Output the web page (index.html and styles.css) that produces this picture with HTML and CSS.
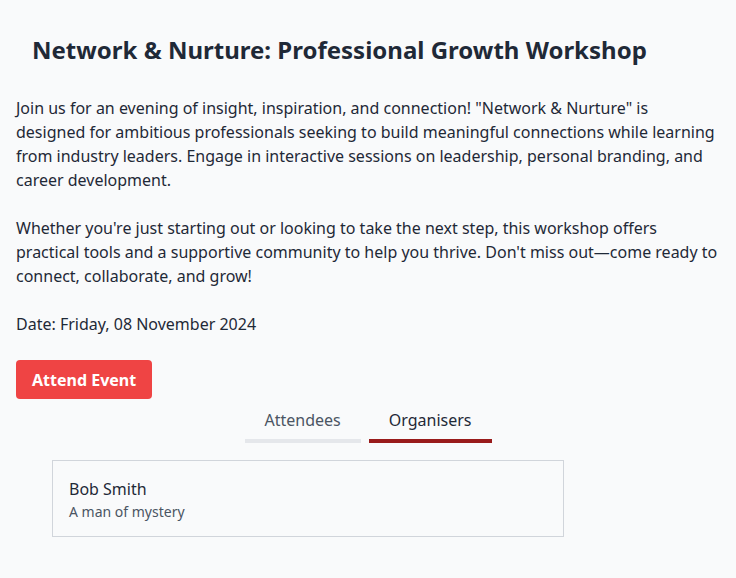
FILE: index.html
```html
<!DOCTYPE html>
<html>
<head>
<meta charset="utf-8">
<link rel="stylesheet" href="styles.css">
</head>
<body>
<div class="page">
  <h1 class="title">Network &amp; Nurture: Professional Growth Workshop</h1>
  <p class="desc first">Join us for an evening of insight, inspiration, and connection! "Network &amp; Nurture" is designed for ambitious professionals seeking to build meaningful connections while learning from industry leaders. Engage in interactive sessions on leadership, personal branding, and career development.</p>
  <p class="desc">Whether you're just starting out or looking to take the next step, this workshop offers practical tools and a supportive community to help you thrive. Don't miss out—come ready to connect, collaborate, and grow!</p>
  <p class="desc">Date: Friday, 08 November 2024</p>
  <button class="attend">Attend Event</button>
  <div class="tabs">
    <div class="tab">Attendees</div>
    <div class="tab active">Organisers</div>
  </div>
  <div class="list">
    <div class="card">
      <div class="name">Bob Smith</div>
      <div class="bio">A man of mystery</div>
    </div>
  </div>
</div>
</body>
</html>
```
FILE: styles.css
```css
html, body {
  margin: 0;
  background: #f9fafb;
}
body {
  font-family: "Noto Sans", "Open Sans", sans-serif;
  color: #1f2937;
}
.page {
  padding: 16px;
}
.title {
  margin: 18px 0 0 16px;
  font-size: 24px;
  line-height: 32px;
  font-weight: 700;
  color: #1f2937;
}
.desc {
  margin: 24px 0 0 0;
  font-size: 16px;
  line-height: 24px;
}
.desc.first {
  margin-top: 30px;
}
.attend {
  margin-top: 24px;
  background: #ef4444;
  color: #fff;
  border: none;
  border-radius: 4px;
  font-family: inherit;
  font-size: 16px;
  font-weight: 700;
  height: 39px;
  padding: 0 16px;
}
.tabs {
  display: flex;
  justify-content: center;
  gap: 8px;
}
.tab {
  font-size: 16px;
  line-height: 34px;
  padding: 4px 20px 2px;
  border-bottom: 4px solid #e5e7eb;
  color: #4b5563;
}
.tab.active {
  border-bottom-color: #991b1b;
  color: #1f2937;
}
.list {
  margin-top: 17px;
  padding-left: 36px;
}
.card {
  box-sizing: border-box;
  width: 512px;
  border: 1px solid #d1d5db;
  padding: 18px 16px 14px;
}
.name {
  font-size: 16px;
  line-height: 20px;
}
.bio {
  margin-top: 3px;
  font-size: 14px;
  line-height: 20px;
  color: #4b5563;
}
```
